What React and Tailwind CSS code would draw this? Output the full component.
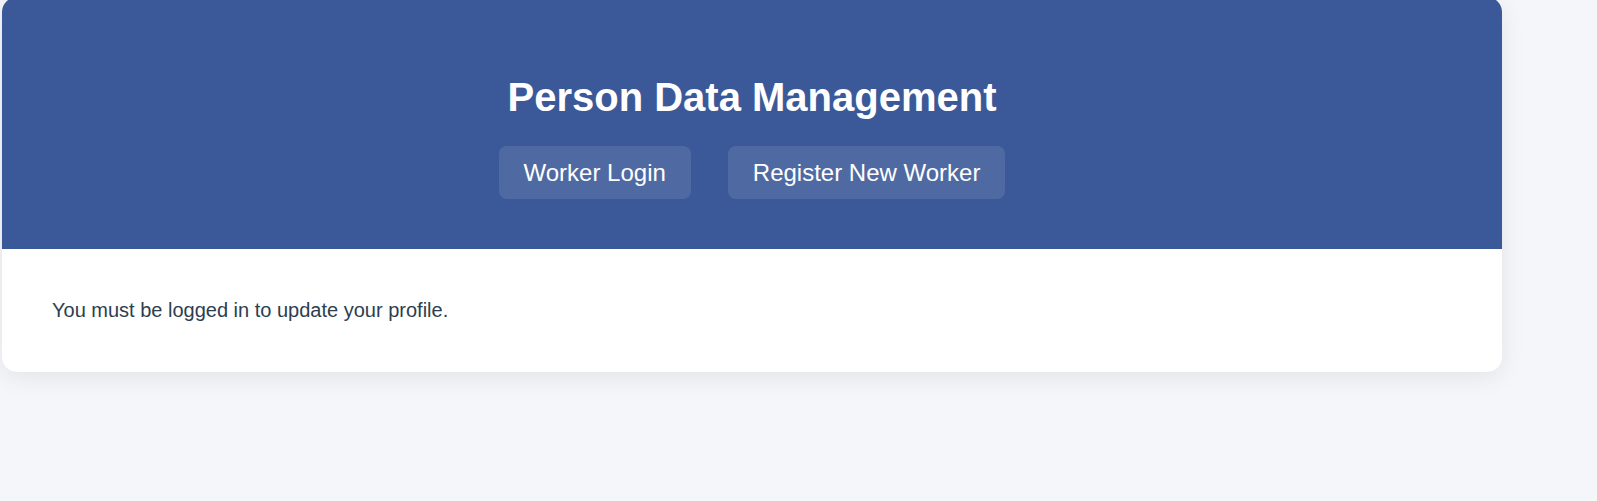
import React from "react";

export default function App() {
  return (
    <div
      className="min-h-screen bg-[#f5f6fa] overflow-hidden"
      style={{ fontFamily: '"Liberation Sans", Arial, sans-serif' }}
    >
      <div className="ml-[2px] mt-[-3px] w-[1500px] rounded-[15px] bg-white shadow-[0_5px_25px_rgba(0,0,0,0.08)] overflow-hidden">
        <header className="bg-[#3b5998] pt-[77px] pb-[50px] text-center text-white">
          <h1 className="m-0 text-[40px] leading-[46px] font-bold">Person Data Management</h1>
          <nav className="mt-[26px] flex justify-center gap-[37px]">
            <button className="h-[53px] rounded-[8px] bg-white/10 px-[25px] text-[24px] text-white">
              Worker Login
            </button>
            <button className="h-[53px] rounded-[8px] bg-white/10 px-[25px] text-[24px] text-white">
              Register New Worker
            </button>
          </nav>
        </header>
        <main className="px-[50px] py-[50px]">
          <p className="m-0 text-[20px] leading-[23px] text-[#2c3e50]">
            You must be logged in to update your profile.
          </p>
        </main>
      </div>
    </div>
  );
}
